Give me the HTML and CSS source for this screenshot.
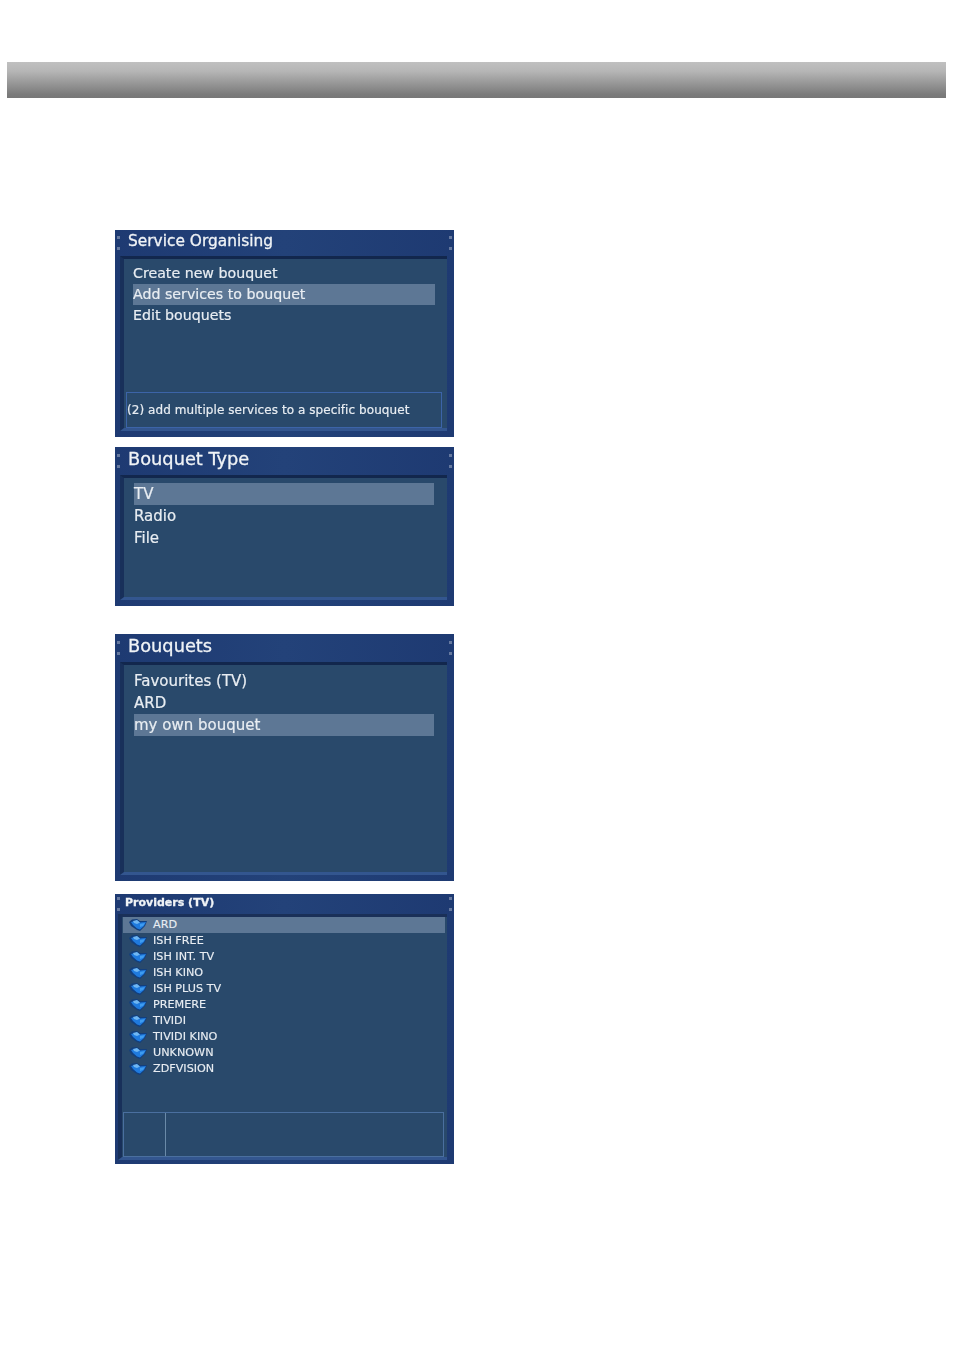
FILE: index.html
```html
<!DOCTYPE html>
<html lang="en">
<head>
    <meta charset="UTF-8">
    <title>Service Organising</title>
    <link rel="stylesheet" href="styles.css">
</head>
<body>
<svg class="defs" width="0" height="0">
    <symbol id="folder" viewBox="0 0 18 12">
        <path d="M0 3 L3 .5 L8 0 L11 2 L18 2 L16 7 L11 12 L8 11 L2 7 Z" fill="#123f7e"/>
        <path d="M2 3 L8 1.5 L11 3.5 L17 3 L15 7 L11 10.5 L8 9.5 L4 6 Z" fill="#1f7ade"/>
        <path d="M4 2 L8 1 L11 3.5 L8 5 L5 4 Z" fill="#6fb6f2"/>
        <path d="M11 5 L16 4 L14 7 L11 8 Z" fill="#3f9cf0"/>
    </symbol>
</svg>

<div class="top-bar"></div>

<section class="panel panel-service">
    <div class="panel-title"><i class="grip"></i><h2>Service Organising</h2><i class="grip"></i></div>
    <div class="panel-body">
        <ul class="menu">
            <li>Create new bouquet</li>
            <li class="selected">Add services to bouquet</li>
            <li>Edit bouquets</li>
        </ul>
        <div class="hint">(2) add multiple services to a specific bouquet</div>
    </div>
</section>

<section class="panel panel-type">
    <div class="panel-title"><i class="grip"></i><h2>Bouquet Type</h2><i class="grip"></i></div>
    <div class="panel-body">
        <ul class="menu">
            <li class="selected">TV</li>
            <li>Radio</li>
            <li>File</li>
        </ul>
    </div>
</section>

<section class="panel panel-bouquets">
    <div class="panel-title"><i class="grip"></i><h2>Bouquets</h2><i class="grip"></i></div>
    <div class="panel-body">
        <ul class="menu">
            <li>Favourites (TV)</li>
            <li>ARD</li>
            <li class="selected">my own bouquet</li>
        </ul>
    </div>
</section>

<section class="panel panel-providers">
    <div class="panel-title"><i class="grip"></i><h2>Providers (TV)</h2><i class="grip"></i></div>
    <div class="panel-body">
        <ul class="providers">
            <li class="selected"><svg class="folder"><use href="#folder"/></svg>ARD</li>
            <li><svg class="folder"><use href="#folder"/></svg>ISH FREE</li>
            <li><svg class="folder"><use href="#folder"/></svg>ISH INT. TV</li>
            <li><svg class="folder"><use href="#folder"/></svg>ISH KINO</li>
            <li><svg class="folder"><use href="#folder"/></svg>ISH PLUS TV</li>
            <li><svg class="folder"><use href="#folder"/></svg>PREMERE</li>
            <li><svg class="folder"><use href="#folder"/></svg>TIVIDI</li>
            <li><svg class="folder"><use href="#folder"/></svg>TIVIDI KINO</li>
            <li><svg class="folder"><use href="#folder"/></svg>UNKNOWN</li>
            <li><svg class="folder"><use href="#folder"/></svg>ZDFVISION</li>
        </ul>
        <div class="info-box">
            <div class="info-left"></div>
            <div class="info-right"></div>
        </div>
    </div>
</section>
</body>
</html>
```

FILE: styles.css
```css
body {
    margin: 0;
    background: white;
    font-family: "DejaVu Sans", sans-serif;
    color: #e8edf2;
}
.defs { position: absolute; }

.top-bar {
    height: 36px;
    margin: 62px 8px 132px 7px;
    background: linear-gradient(#c0c0c0, #b6b6b6 25%, #7b7b7b 90%, #777);
}

/* Receiver menu panels */
.panel {
    width: 339px;
    margin-left: 115px;
    box-sizing: border-box;
    display: flex;
    flex-direction: column;
    padding: 0 7px 6px 5px;
    background: linear-gradient(90deg, #1e3a72, #234279 50%, #1e3a72);
}
.panel-service { height: 207px; margin-bottom: 10px; }
.panel-type { height: 159px; margin-bottom: 28px; }
.panel-bouquets { height: 247px; margin-bottom: 13px; }
.panel-providers { height: 270px; padding: 0 7px 4px 3px; }

.panel-title {
    height: 26px;
    flex: none;
    margin: 0 -5px 0 -3px;
    display: flex;
    justify-content: space-between;
    align-items: center;
}
.panel-title h2 {
    flex: 1;
    margin: 0 0 5px 8px;
    font-size: 15.4px;
    font-weight: normal;
    color: #f0f3f6;
    -webkit-text-stroke: 0.3px #f0f3f6;
    filter: blur(0.5px);
}
.grip {
    width: 3px;
    height: 14px;
    border-top: 3px solid #66799f;
    border-bottom: 3px solid #66799f;
    box-sizing: border-box;
    filter: blur(0.5px);
}
.panel-type .panel-title { height: 28px; }
.panel-bouquets .panel-title { height: 28px; }
.panel-type h2, .panel-bouquets h2 { font-size: 17.8px; }
.panel-providers .panel-title { height: 20px; margin-left: -1px; }
.panel-providers h2 { font-size: 11px; font-weight: bold; margin: 0 0 4px 5px; }

.panel-body {
    flex: 1;
    display: flex;
    flex-direction: column;
    background: #29496b;
    border-top: 3px solid #12274d;
    border-left: 4px solid #18305a;
    border-bottom: 3px solid #33568f;
}
.panel-providers .panel-body { border-top-color: #1a3058; }

.menu {
    list-style: none;
    margin: 0;
    padding: 4px 12px 0 9px;
    font-size: 14.2px;
    -webkit-text-stroke: 0.2px #e8edf2;
    filter: blur(0.5px);
}
.menu li {
    height: 21px;
    line-height: 21px;
}
.selected { background: #5d7795; }

.panel-type .menu, .panel-bouquets .menu {
    padding: 5px 13px 0 10px;
    font-size: 15px;
}
.panel-type .menu li, .panel-bouquets .menu li {
    height: 22px;
    line-height: 22px;
}

.hint {
    margin: auto 5px 0 2px;
    height: 36px;
    line-height: 35px;
    box-sizing: border-box;
    border: 1px solid #3c64a8;
    font-size: 12px;
    letter-spacing: 0.07px;
    -webkit-text-stroke: 0.2px #e8edf2;
    filter: blur(0.4px);
    white-space: nowrap;
}

.providers {
    list-style: none;
    margin: 0 2px 0 1px;
    padding: 0;
    font-size: 11.2px;
    -webkit-text-stroke: 0.15px #e8edf2;
    filter: blur(0.4px);
}
.providers li {
    height: 16px;
    line-height: 16px;
    display: flex;
    align-items: center;
}
.folder {
    width: 18px;
    height: 12px;
    margin: 0 6px 0 6px;
    flex: none;
}

.info-box {
    margin: auto 3px 0 1px;
    height: 45px;
    display: flex;
    box-sizing: border-box;
    border: 1px solid #4a6f9f;
}
.info-left {
    width: 41px;
    border-right: 1px solid #6a8aa8;
}
.info-right { flex: 1; }
```
